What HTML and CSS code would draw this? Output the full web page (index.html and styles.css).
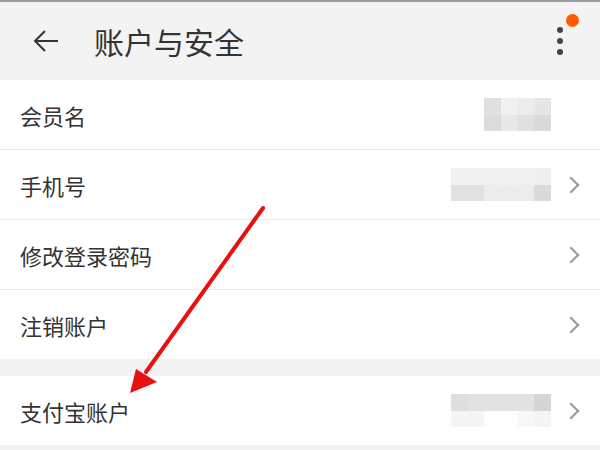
FILE: index.html
```html
<!DOCTYPE html>
<html lang="zh-CN">
<head>
    <meta charset="UTF-8">
    <title>账户与安全</title>
    <link rel="stylesheet" href="styles.css">
</head>
<body>
    <div class="page">
        <div class="header">
            <svg class="back" width="28" height="24" viewBox="0 0 28 24">
                <path d="M26 12H3M13 2L3 12l10 10" fill="none" stroke="#333" stroke-width="2"/>
            </svg>
            <h1>账户与安全</h1>
            <div class="more">
                <span></span><span></span><span></span>
                <i class="badge"></i>
            </div>
        </div>

        <div class="group">
            <div class="row">
                <span class="label">会员名</span>
                <div class="mosaic m1">
                    <b style="background:#e0e0e0"></b><b style="background:#f0f0f0"></b><b style="background:#ececec"></b><b style="background:#e6e6e6"></b>
                    <b style="background:#dcdcdc"></b><b style="background:#e8e8e8"></b><b style="background:#e0e0e0"></b><b style="background:#dadada"></b>
                </div>
                <span class="chev blank"></span>
            </div>
            <div class="row">
                <span class="label">手机号</span>
                <div class="mosaic m2">
                    <b style="background:#f1f1f1"></b><b style="background:#f1f1f1"></b><b style="background:#f0f0f0"></b><b style="background:#f1f1f1"></b><b style="background:#f0f0f0"></b><b style="background:#efefef"></b>
                    <b style="background:#e1e1e1"></b><b style="background:#e1e1e1"></b><b style="background:#ececec"></b><b style="background:#ececec"></b><b style="background:#ececec"></b><b style="background:#dadada"></b>
                </div>
                <span class="chev"></span>
            </div>
            <div class="row">
                <span class="label">修改登录密码</span>
                <span class="chev"></span>
            </div>
            <div class="row">
                <span class="label">注销账户</span>
                <span class="chev"></span>
            </div>
        </div>

        <div class="group">
            <div class="row">
                <span class="label">支付宝账户</span>
                <div class="mosaic m2">
                    <b style="background:#dedede"></b><b style="background:#e2e2e2"></b><b style="background:#e2e2e2"></b><b style="background:#e2e2e2"></b><b style="background:#e2e2e2"></b><b style="background:#d5d5d5"></b>
                    <b style="background:#f5f5f5"></b><b style="background:#f5f5f5"></b><b style="background:#fefefe"></b><b style="background:#fefefe"></b><b style="background:#f8f8f8"></b><b style="background:#f4f4f4"></b>
                </div>
                <span class="chev"></span>
            </div>
        </div>

        <svg class="pointer" width="600" height="450" viewBox="0 0 600 450">
            <line x1="263" y1="208" x2="146" y2="372" stroke="#e81010" stroke-width="4" stroke-linecap="round"/>
            <polygon points="130,393 136,369 157,382" fill="#e81010"/>
        </svg>
    </div>
</body>
</html>
```

FILE: styles.css
```css
body {
    margin: 0;
    font-family: "Noto Sans CJK SC", "Noto Sans", sans-serif;
    color: #333;
    background: #f2f2f2;
}

.page {
    position: relative;
    width: 600px;
    height: 450px;
    overflow: hidden;
    background: #f2f2f2;
}

.header {
    height: 80px;
    border-top: 2px solid #9c9c9c;
    display: flex;
    align-items: center;
    padding: 0 15px 0 32px;
    box-sizing: border-box;
    background: #f3f3f3;
}

.back {
    display: block;
}

.header h1 {
    margin: 0 0 0 34px;
    font-size: 30px;
    font-weight: 400;
    color: #333;
    flex: 1;
    line-height: 1;
}

.more {
    position: relative;
    width: 50px;
    height: 40px;
    display: flex;
    flex-direction: column;
    align-items: center;
    justify-content: center;
    gap: 5px;
}

.more span {
    width: 6px;
    height: 6px;
    border-radius: 50%;
    background: #444;
}

.badge {
    position: absolute;
    top: -7px;
    right: 6px;
    width: 13px;
    height: 13px;
    border-radius: 50%;
    background: #ff5a00;
}

.group {
    background: #fff;
    margin-bottom: 17px;
}

.row {
    height: 69px;
    display: flex;
    align-items: center;
    padding: 0 20px;
    border-bottom: 1px solid #ececec;
}

.row:last-child {
    border-bottom: none;
}

.label {
    flex: 1;
    font-size: 22px;
    color: #333;
}

.mosaic {
    display: grid;
    grid-auto-rows: 16.5px;
    margin-right: 14px;
}

.mosaic b {
    display: block;
}

.m1 {
    grid-template-columns: repeat(4, 16.75px);
}

.m2 {
    grid-template-columns: repeat(6, 16.7px);
}

.chev {
    width: 10px;
    height: 10px;
    border-top: 2px solid #999;
    border-right: 2px solid #999;
    transform: rotate(45deg);
    margin-right: 3px;
}

.chev.blank {
    border-color: transparent;
}

.pointer {
    position: absolute;
    left: 0;
    top: 0;
    pointer-events: none;
}
```
